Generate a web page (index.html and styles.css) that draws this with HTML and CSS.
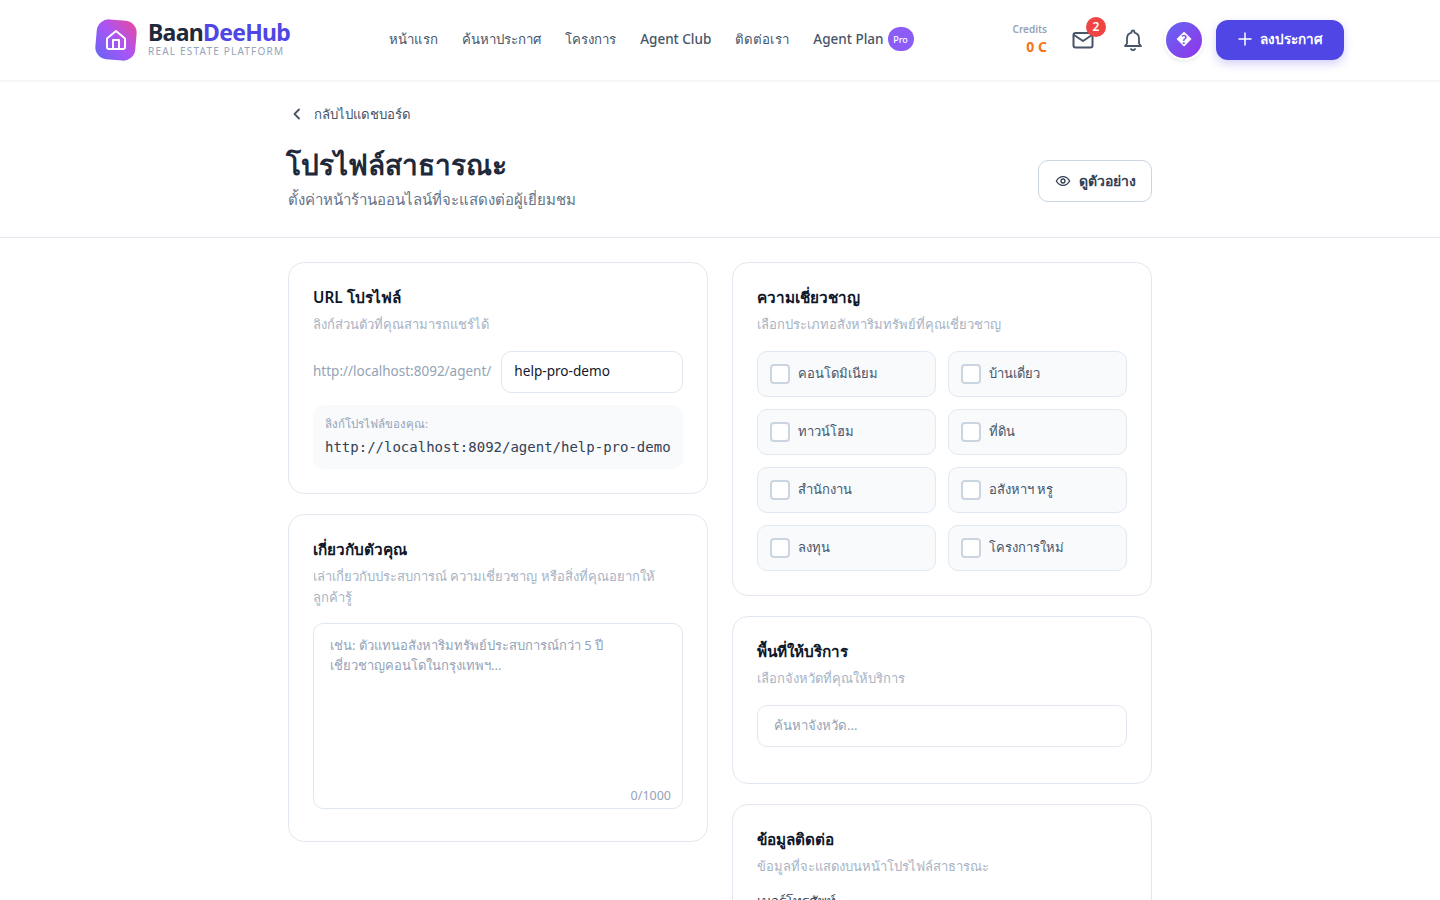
FILE: index.html
```html
<!DOCTYPE html>
<html lang="th">
<head>
  <meta charset="UTF-8">
  <meta name="viewport" content="width=device-width, initial-scale=1.0">
  <title>โปรไฟล์สาธารณะ - BaanDeeHub</title>
  <link rel="stylesheet" href="styles.css">
</head>
<body>

<!-- Top navigation -->
<header class="topbar">
  <div class="topbar-inner">
    <a class="brand" href="#">
      <span class="brand-mark">
        <svg width="24" height="24" viewBox="0 0 24 24" fill="none" stroke="#fff" stroke-width="2" stroke-linecap="round" stroke-linejoin="round">
          <path d="M3 10.500 12 3l9 7.500V19a2 2 0 0 1-2 2H5a2 2 0 0 1-2-2z"/>
          <path d="M9 21v-9h6v9"/>
        </svg>
      </span>
      <span class="brand-text">
        <span class="brand-name">Baan<em>DeeHub</em></span>
        <span class="brand-tag">REAL ESTATE PLATFORM</span>
      </span>
    </a>

    <nav class="nav">
      <a href="#">หน้าแรก</a>
      <a href="#">ค้นหาประกาศ</a>
      <a href="#">โครงการ</a>
      <a href="#" class="nav-latin">Agent Club</a>
      <a href="#">ติดต่อเรา</a>
      <a href="#" class="nav-latin nav-plan">Agent Plan <span class="pro-pill">Pro</span></a>
    </nav>

    <div class="topbar-right">
      <div class="credits">
        <span class="credits-label">Credits</span>
        <span class="credits-value">0 C</span>
      </div>
      <button class="icon-btn">
        <svg width="24" height="24" viewBox="0 0 24 24" fill="none" stroke="#475569" stroke-width="2" stroke-linecap="round" stroke-linejoin="round">
          <rect x="2.500" y="5" width="19" height="14.500" rx="2"/>
          <path d="m3 7 9 6 9-6"/>
        </svg>
        <span class="badge">2</span>
      </button>
      <button class="icon-btn">
        <svg width="24" height="24" viewBox="0 0 24 24" fill="none" stroke="#475569" stroke-width="1.800" stroke-linecap="round" stroke-linejoin="round">
          <path d="M12 2.500a1.500 1.500 0 0 1 1.500 1.500v.7A6 6 0 0 1 18 10.500v5l2 2.500H4l2-2.500v-5a6 6 0 0 1 4.500-5.800V4A1.500 1.500 0 0 1 12 2.500z"/>
          <path d="M10 21a2.300 2.300 0 0 0 4 0"/>
        </svg>
      </button>
      <div class="avatar">�</div>
      <button class="post-btn">
        <svg width="14" height="14" viewBox="0 0 14 14" fill="none" stroke="#fff" stroke-width="1.500" stroke-linecap="round">
          <path d="M7 1v12M1 7h12"/>
        </svg>
        ลงประกาศ
      </button>
    </div>
  </div>
</header>

<!-- Page heading -->
<section class="page-head">
  <div class="wrap">
    <a class="back-link" href="#">
      <svg width="18" height="18" viewBox="0 0 18 18" fill="none" stroke="#475569" stroke-width="1.800" stroke-linecap="round" stroke-linejoin="round">
        <path d="M11 4.500 6.500 9l4.500 4.500"/>
      </svg>
      กลับไปแดชบอร์ด
    </a>
    <div class="head-row">
      <div>
        <h1>โปรไฟล์สาธารณะ</h1>
        <p class="head-sub">ตั้งค่าหน้าร้านออนไลน์ที่จะแสดงต่อผู้เยี่ยมชม</p>
      </div>
      <button class="preview-btn">
        <svg width="16" height="16" viewBox="0 0 24 24" fill="none" stroke="#334155" stroke-width="2" stroke-linecap="round" stroke-linejoin="round">
          <path d="M2 12s3.600-6.500 10-6.500S22 12 22 12s-3.600 6.500-10 6.500S2 12 2 12z"/>
          <circle cx="12" cy="12" r="3"/>
        </svg>
        ดูตัวอย่าง
      </button>
    </div>
  </div>
</section>

<main class="wrap columns">
  <div class="col">
    <section class="card">
      <h2>URL โปรไฟล์</h2>
      <p class="card-sub">ลิงก์ส่วนตัวที่คุณสามารถแชร์ได้</p>
      <div class="url-row">
        <span class="url-prefix">http://localhost:8092/agent/</span>
        <input class="text-input slug-input" type="text" value="help-pro-demo">
      </div>
      <div class="url-box">
        <div class="url-box-label">ลิงก์โปรไฟล์ของคุณ:</div>
        <code>http://localhost:8092/agent/help-pro-demo</code>
      </div>
    </section>

    <section class="card">
      <h2>เกี่ยวกับตัวคุณ</h2>
      <p class="card-sub">เล่าเกี่ยวกับประสบการณ์ ความเชี่ยวชาญ หรือสิ่งที่คุณอยากให้ลูกค้ารู้</p>
      <div class="bio-wrap">
        <textarea class="bio" placeholder="เช่น: ตัวแทนอสังหาริมทรัพย์ประสบการณ์กว่า 5 ปี&#10;เชี่ยวชาญคอนโดในกรุงเทพฯ..."></textarea>
        <span class="counter">0/1000</span>
      </div>
    </section>
  </div>

  <div class="col">
    <section class="card">
      <h2>ความเชี่ยวชาญ</h2>
      <p class="card-sub">เลือกประเภทอสังหาริมทรัพย์ที่คุณเชี่ยวชาญ</p>
      <div class="check-grid">
        <label class="check"><span class="box"></span>คอนโดมิเนียม</label>
        <label class="check"><span class="box"></span>บ้านเดี่ยว</label>
        <label class="check"><span class="box"></span>ทาวน์โฮม</label>
        <label class="check"><span class="box"></span>ที่ดิน</label>
        <label class="check"><span class="box"></span>สำนักงาน</label>
        <label class="check"><span class="box"></span>อสังหาฯ หรู</label>
        <label class="check"><span class="box"></span>ลงทุน</label>
        <label class="check"><span class="box"></span>โครงการใหม่</label>
      </div>
    </section>

    <section class="card card-area">
      <h2>พื้นที่ให้บริการ</h2>
      <p class="card-sub">เลือกจังหวัดที่คุณให้บริการ</p>
      <input class="text-input search-input" type="text" placeholder="ค้นหาจังหวัด...">
    </section>

    <section class="card">
      <h2>ข้อมูลติดต่อ</h2>
      <p class="card-sub">ข้อมูลที่จะแสดงบนหน้าโปรไฟล์สาธารณะ</p>
      <label class="field-label">เบอร์โทรศัพท์</label>
      <input class="text-input search-input" type="text">
    </section>
  </div>
</main>

</body>
</html>
```

FILE: styles.css
```css
* { box-sizing: border-box; }
body { margin: 0; font-family: "Noto Sans", Inter, sans-serif; background: #fff; color: #1e293b; }
a { color: inherit; text-decoration: none; }
button { font-family: inherit; cursor: pointer; }

/* Top navigation */
.topbar { height: 81px; border-bottom: 1px solid #f1f5f9; box-shadow: 0 1px 2px rgba(0,0,0,0.03); }
.topbar-inner { width: 1248px; height: 80px; margin: 0 auto; display: flex; align-items: center; justify-content: space-between; }
.brand { display: flex; align-items: center; gap: 12px; }
.brand-mark {
  width: 40px;
  height: 40px;
  border-radius: 12px;
  background: linear-gradient(45deg, #6366f1, #a855f7 50%, #ec4899);
  display: flex;
  align-items: center;
  justify-content: center;
  transform: rotate(5deg);
}
.brand-mark svg { transform: rotate(-5deg); }
.brand-text { display: flex; flex-direction: column; padding-bottom: 2px; }
.brand-name { font-size: 23px; font-weight: 700; line-height: 24px; color: #1e293b; letter-spacing: -0.7px; }
.brand-name em { font-style: normal; color: #4f46e5; }
.brand-tag { font-size: 10px; line-height: 14px; color: #94a3b8; letter-spacing: 1.2px; }
.nav { display: flex; align-items: center; gap: 24px; font-size: 13.250px; font-weight: 500; color: #475569; margin-top: -2px; }
.nav-latin { font-size: 13.500px; }
.nav-plan { display: flex; align-items: center; gap: 4px; }
.pro-pill { width: 26px; height: 24px; border-radius: 12px; background: #8b5cf6; color: #fff; font-size: 9px; display: flex; align-items: center; justify-content: center; }
.topbar-right { display: flex; align-items: center; }
.credits { display: flex; flex-direction: column; align-items: flex-end; gap: 2px; margin-right: 24px; }
.credits-label { font-size: 10px; font-weight: 600; line-height: 12px; color: #94a3b8; }
.credits-value { font-size: 14px; font-weight: 700; line-height: 20px; color: #f97316; }
.icon-btn { position: relative; width: 24px; height: 24px; padding: 0; border: none; background: none; margin-right: 26px; }
.icon-btn + .icon-btn { margin-right: 21px; }
.badge {
  position: absolute;
  top: -11px;
  right: -11px;
  width: 20px;
  height: 20px;
  border-radius: 50%;
  background: #ef4444;
  color: #fff;
  font-size: 12px;
  font-weight: 600;
  line-height: 20px;
  text-align: center;
}
.avatar {
  width: 36px;
  height: 36px;
  padding-bottom: 4px;
  border-radius: 50%;
  background: linear-gradient(135deg, #6366f1, #9333ea);
  color: #fff;
  font-size: 16px;
  font-weight: 700;
  display: flex;
  align-items: center;
  justify-content: center;
  margin-right: 14px;
  box-shadow: 0 0 0 2px #fff, 0 2px 6px rgba(0,0,0,0.15);
}
.post-btn {
  width: 128px;
  height: 40px;
  padding: 0 0 2px;
  border: none;
  border-radius: 12px;
  background: #4f46e5;
  color: #fff;
  font-size: 13.500px;
  font-weight: 600;
  display: flex;
  align-items: center;
  justify-content: center;
  gap: 8px;
  box-shadow: 0 4px 10px rgba(79,70,229,0.25);
}

/* Page heading */
.wrap { width: 864px; margin: 0 auto; }
.page-head { height: 157px; border-bottom: 1px solid #e2e8f0; padding-top: 23px; }
.back-link { display: flex; align-items: center; gap: 8px; height: 20px; font-size: 13.200px; color: #475569; }
.head-row { display: flex; align-items: center; justify-content: space-between; margin-top: 21px; }
h1 { margin: 0 0 0 -2px; font-size: 28px; line-height: 38px; font-weight: 700; color: #1e293b; }
.head-sub { margin: 4px 0 0; font-size: 15px; line-height: 24px; color: #64748b; }
.preview-btn {
  width: 114px;
  height: 42px;
  border: 1px solid #cbd5e1;
  border-radius: 10px;
  background: #fff;
  color: #334155;
  font-size: 14px;
  font-weight: 600;
  display: flex;
  align-items: center;
  justify-content: center;
  gap: 8px;
  margin-top: 6px;
}

/* Cards */
.columns { display: grid; grid-template-columns: 420px 420px; gap: 24px; padding-top: 24px; align-items: start; }
.col { display: flex; flex-direction: column; gap: 20px; }
.card { border: 1px solid #e2e8f0; border-radius: 16px; padding: 24px; background: #fff; }
h2 { margin: 0; font-size: 15.300px; line-height: 20px; font-weight: 600; color: #0f172a; }
.card-sub { margin: 7px 0 16px; font-size: 13px; line-height: 21px; color: #a8b3c4; }
.text-input { height: 42px; border: 1px solid #e2e8f0; border-radius: 10px; font-family: inherit; font-size: 13.600px; color: #111827; outline: none; background: #fff; }
.text-input::placeholder { color: #94a3b8; font-size: 13.200px; }

.url-row { display: flex; align-items: center; gap: 10px; }
.url-prefix { flex: none; font-size: 13.500px; color: #94a3b8; margin-top: -3px; }
.slug-input { flex: 1; min-width: 0; padding: 0 12px 3px; }
.url-box { margin-top: 12px; height: 64px; padding: 10px 12px; background: #f8fafc; border-radius: 10px; }
.url-box-label { font-size: 11.500px; line-height: 18px; color: #94a3b8; }
.url-box code { display: block; margin-top: 4px; font-family: "DejaVu Sans Mono", monospace; font-size: 14px; line-height: 20px; color: #334155; }

.bio-wrap { position: relative; margin-top: -1px; padding-bottom: 8px; }
.bio {
  display: block;
  width: 100%;
  height: 186px;
  padding: 11px 16px;
  border: 1px solid #e2e8f0;
  border-radius: 10px;
  font-family: inherit;
  font-size: 13px;
  line-height: 20px;
  resize: none;
  outline: none;
}
.bio::placeholder { color: #94a3b8; }
.counter { position: absolute; right: 12px; bottom: 12px; font-size: 12.500px; line-height: 18px; color: #94a3b8; }

.check-grid { display: grid; grid-template-columns: 1fr 1fr; gap: 12px; }
.check {
  display: flex;
  align-items: center;
  gap: 8px;
  height: 46px;
  padding: 0 12px 2px;
  background: #f8fafc;
  border: 1px solid #e2e8f0;
  border-radius: 10px;
  font-size: 13px;
  color: #475569;
}
.box { flex: none; width: 20px; height: 20px; margin-top: 2px; border: 2px solid #cbd5e1; border-radius: 4px; background: #fff; }

.card-area { padding-bottom: 36px; }
.search-input { display: block; width: 100%; padding: 0 16px 3px; }
.field-label { display: block; margin: -2px 0 6px; font-size: 13.500px; font-weight: 500; line-height: 20px; color: #334155; }
```
